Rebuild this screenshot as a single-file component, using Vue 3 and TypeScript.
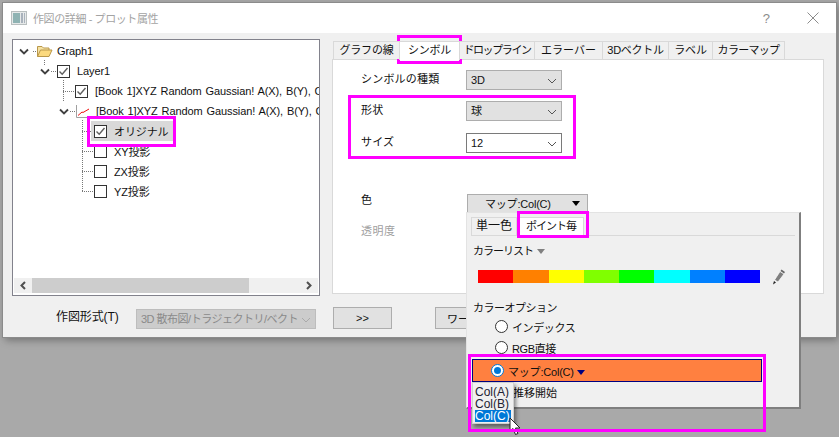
<script setup lang="ts">
interface TreeRow {
  label: string
  pad: number
  icon: 'folder' | 'check' | 'empty' | 'graph'
  chevron: boolean
  selected?: boolean
}
const treeRows: TreeRow[] = [
  { label: 'Graph1', pad: 23, icon: 'folder', chevron: true },
  { label: 'Layer1', pad: 44, icon: 'check', chevron: true },
  { label: '[Book 1]XYZ Random Gaussian! A(X), B(Y), C(Z)', pad: 62, icon: 'check', chevron: false },
  { label: '[Book 1]XYZ Random Gaussian! A(X), B(Y), C(Z)', pad: 63, icon: 'graph', chevron: true },
  { label: 'オリジナル', pad: 81, icon: 'check', chevron: false, selected: true },
  { label: 'XY投影', pad: 81, icon: 'empty', chevron: false },
  { label: 'ZX投影', pad: 81, icon: 'empty', chevron: false },
  { label: 'YZ投影', pad: 81, icon: 'empty', chevron: false }
]
const tabs = [
  { label: 'グラフの線', width: 67, active: false, spacing: -0.2 },
  { label: 'シンボル', width: 61, active: true, spacing: -0.2 },
  { label: 'ドロップライン', width: 76, active: false, spacing: -1.4 },
  { label: 'エラーバー', width: 69, active: false, spacing: 0 },
  { label: '3Dベクトル', width: 67, active: false, spacing: -0.3 },
  { label: 'ラベル', width: 45, active: false, spacing: -0.2 },
  { label: 'カラーマップ', width: 73, active: false, spacing: -0.7 }
]
const palette = ['#ff0000', '#ff8000', '#ffff00', '#80ff00', '#00ff00', '#00ffff', '#0080ff', '#0000ff']
const columns = ['Col(A)', 'Col(B)', 'Col(C)']
</script>

<template>
  <div class="screen">
    <div class="dialog">
      <header class="titlebar">
        <svg class="title-icon" width="16" height="14" viewBox="0 0 16 14">
          <rect x="0.5" y="0.5" width="15" height="13" fill="#e6e9e9" stroke="#b9bfbf" />
          <rect x="2" y="2" width="7" height="10" fill="#8fb3b3" />
          <rect x="10" y="2" width="2" height="10" fill="#a9b2bc" />
          <rect x="13" y="2" width="1" height="10" fill="#a9b2bc" />
        </svg>
        <span class="title-text">作図の詳細 - プロット属性</span>
        <span class="help">?</span>
        <svg class="close" width="12" height="12" viewBox="0 0 12 12">
          <path d="M0.5 0.5 L11.5 11.5 M11.5 0.5 L0.5 11.5" stroke="#8c8c8c" fill="none" />
        </svg>
      </header>

      <div class="content">
        <div class="tree">
          <svg class="tree-lines" width="306" height="238" viewBox="13 40 306 238">
            <g stroke="#777" stroke-dasharray="1 1" fill="none">
              <path d="M33 51.5H36" />
              <path d="M44.5 60V65" />
              <path d="M51 71.5H56" />
              <path d="M63.5 80V101" />
              <path d="M63 91.5H75" />
              <path d="M70 111.5H75" />
              <path d="M82.5 120V191" />
              <path d="M82 131.5H94M82 151.5H94M82 171.5H94M82 191.5H94" />
            </g>
          </svg>
          <div class="tree-rows">
            <div v-for="(row, i) in treeRows" :key="i" class="tree-row" :style="{ paddingLeft: row.pad + 'px' }">
              <svg v-if="row.chevron" class="tree-chevron" width="10" height="7" viewBox="0 0 10 7">
                <path d="M1 1.5 L5 5.5 L9 1.5" fill="none" stroke="#404040" stroke-width="1.8" />
              </svg>
              <svg v-if="row.icon === 'folder'" class="folder" width="17" height="14" viewBox="0 0 17 14">
                <path d="M1.5 12.5V2.5H6L7.5 4H13V6" fill="#f6e3a4" stroke="#b9974a" />
                <path d="M1.5 12.5L4.5 6H16L13 12.5Z" fill="#fbd97e" stroke="#b9974a" />
              </svg>
              <svg v-else-if="row.icon === 'graph'" class="graph" width="13" height="13" viewBox="0 0 13 13">
                <path d="M0.5 0V12.5H13" fill="none" stroke="#a0a0a0" />
                <path d="M2 10.5L6 7L7 7.5L13 4" fill="none" stroke="#ee1111" />
              </svg>
              <div v-else class="tree-body" :class="{ selected: row.selected }">
                <span class="check">
                  <svg v-if="row.icon === 'check'" width="11" height="11" viewBox="0 0 11 11">
                    <path d="M1.5 5.5L4.2 8.2L9.5 2" fill="none" stroke="#5f5f5f" stroke-width="1.4" />
                  </svg>
                </span>
                <span class="tree-label">{{ row.label }}</span>
              </div>
              <span v-if="row.icon === 'folder' || row.icon === 'graph'" class="tree-label">{{ row.label }}</span>
            </div>
          </div>
          <div class="hscroll">
            <svg class="hs-arrow" width="18" height="15" viewBox="0 0 18 15">
              <path d="M11 4L7.5 7.5L11 11" fill="none" stroke="#505050" stroke-width="2" />
            </svg>
            <div class="hs-thumb"></div>
            <svg class="hs-arrow end" width="18" height="15" viewBox="0 0 18 15">
              <path d="M7 4L10.5 7.5L7 11" fill="none" stroke="#505050" stroke-width="2" />
            </svg>
          </div>
        </div>

        <div class="props">
          <div class="tabbar">
            <div
              v-for="tab in tabs"
              :key="tab.label"
              class="tab"
              :class="{ active: tab.active }"
              :style="{ width: tab.width + 'px', letterSpacing: tab.spacing + 'px' }"
            >{{ tab.label }}</div>
          </div>
          <div class="panel">
            <div class="form-row first">
              <span class="form-label">シンボルの種類</span>
              <div class="combo">3D
                <svg class="chev" width="10" height="6" viewBox="0 0 10 6"><path d="M1 1L5 5L9 1" fill="none" stroke="#555" /></svg>
              </div>
            </div>
            <div class="form-row second">
              <span class="form-label">形状</span>
              <div class="combo">球
                <svg class="chev" width="10" height="6" viewBox="0 0 10 6"><path d="M1 1L5 5L9 1" fill="none" stroke="#555" /></svg>
              </div>
            </div>
            <div class="form-row third">
              <span class="form-label">サイズ</span>
              <div class="combo white">12
                <svg class="chev" width="10" height="6" viewBox="0 0 10 6"><path d="M1 1L5 5L9 1" fill="none" stroke="#555" /></svg>
              </div>
            </div>
            <div class="form-row color">
              <span class="form-label">色</span>
              <div class="color-btn">
                <span>マップ:Col(C)</span>
                <i class="tri black"></i>
              </div>
            </div>
            <div class="muted">透明度</div>
          </div>
        </div>
      </div>

      <footer class="footer">
        <span class="footer-label">作図形式(T)</span>
        <div class="combo disabled">
          3D 散布図/トラジェクトリ/ベクト
          <svg class="chev" width="10" height="6" viewBox="0 0 10 6"><path d="M1 1L5 5L9 1" fill="none" stroke="#aaa" /></svg>
        </div>
        <button class="btn more">&gt;&gt;</button>
        <button class="btn wide">ワークシート</button>
      </footer>
    </div>

    <div class="popup">
      <div class="pop-tabs">
        <div class="pop-tab">単一色</div>
        <div class="pop-tab on">ポイント毎</div>
      </div>
      <div class="pop-head">カラーリスト<i class="tri grey"></i></div>
      <div class="palette-row">
        <div class="palette">
          <span v-for="c in palette" :key="c" class="swatch" :style="{ background: c }"></span>
        </div>
        <svg class="pencil" width="14" height="16" viewBox="0 0 14 16">
          <path d="M8 2.5L12 5L6 13L2.5 11Z" fill="#808080" stroke="#fff" stroke-width="0.7" />
          <path d="M9.5 0.5L13 3L12 4.5L8.5 2Z" fill="#666" />
          <path d="M2 12L4 13.5L1 15.5Z" fill="#222" />
        </svg>
      </div>
      <div class="pop-head options">カラーオプション</div>
      <div class="radio-row"><i class="radio"></i>インデックス</div>
      <div class="radio-row"><i class="radio"></i>RGB直接</div>
      <div class="radio-row mapped"><i class="radio on"></i>マップ:Col(C)<i class="tri navy"></i></div>
      <div class="trans">推移開始</div>
    </div>

    <div class="col-menu">
      <div v-for="c in columns" :key="c" class="col-item" :class="{ on: c === 'Col(C)' }">{{ c }}</div>
    </div>

    <svg class="cursor" width="14" height="20" viewBox="0 0 14 20">
      <path d="M1 1V14L4 11.5L6.5 17.5L9 16.5L6.5 11H11Z" fill="#fff" stroke="#222" stroke-width="1" />
    </svg>

    <div class="mark m-tree"></div>
    <div class="mark m-tab"></div>
    <div class="mark m-shape"></div>
    <div class="mark m-pop"></div>
    <div class="mark m-map"></div>
  </div>
</template>

<style>
html, body { margin: 0; background: #a9a9a9; }
</style>

<style scoped>
.screen {
  position: relative;
  width: 839px;
  height: 437px;
  overflow: hidden;
  background: #a9a9a9;
  padding: 3px 0 0 3px;
  box-sizing: border-box;
  font: 11px "Liberation Sans", "Noto Sans CJK JP", sans-serif;
  color: #111;
}
.dialog {
  width: 833px;
  height: 334px;
  background: #f0f0f0;
  box-shadow: 0 0 0 1px #8b8b8b, 2px 3px 8px rgba(0, 0, 0, .35);
  display: flex;
  flex-direction: column;
}
.titlebar {
  height: 30px;
  background: #fff;
  display: flex;
  align-items: center;
  padding: 0 17px 0 8px;
  box-sizing: border-box;
}
.title-icon { margin-right: 6px; }
.title-text { font-size: 11px; letter-spacing: -.4px; color: #a3a3a3; }
.help { margin-left: auto; margin-right: 37px; color: #8c8c8c; font-size: 13px; }
.content {
  display: flex;
  gap: 12px;
  padding: 6px 12px 0 9px;
}
.tree {
  position: relative;
  width: 308px;
  height: 257px;
  box-sizing: border-box;
  background: #fff;
  border: 1px solid #82828c;
  display: flex;
  flex-direction: column;
}
.tree-lines { position: absolute; left: 0; top: 0; pointer-events: none; }
.tree-rows { flex: 1; padding-top: 1px; overflow: hidden; position: relative; }
.tree-row {
  height: 20px;
  display: flex;
  align-items: center;
  white-space: nowrap;
  box-sizing: border-box;
}
.tree-chevron { margin-left: -17px; margin-right: 7px; flex: none; }
.folder { margin-right: 4px; flex: none; }
.graph { margin-right: 7px; flex: none; }
.tree-body { display: flex; align-items: center; height: 20px; }
.tree-body.selected { background: #d9d9d9; margin-left: -3px; padding: 0 5px 0 3px; }
.check {
  width: 13px;
  height: 13px;
  box-sizing: border-box;
  border: 1px solid #333;
  background: #fff;
  margin-right: 7px;
  display: inline-flex;
  flex: none;
}
.tree-label { font-size: 11px; letter-spacing: -.1px; word-spacing: 1px; }
.hscroll {
  height: 15px;
  margin: 0 1px 2px 1px;
  background: #f0f0f0;
  display: flex;
  align-items: center;
}
.hs-thumb { width: 217px; height: 15px; background: #cdcdcd; }
.hs-arrow { flex: none; }
.hs-arrow.end { margin-left: auto; }
.props { width: 492px; padding-top: 2px; }
.tabbar { display: flex; height: 18px; padding-left: 1px; position: relative; z-index: 1; }
.tab {
  box-sizing: border-box;
  height: 18px;
  background: #f0f0f0;
  border: 1px solid #d9d9d9;
  border-bottom: 0;
  margin-right: -1px;
  text-align: center;
  line-height: 17px;
  white-space: nowrap;
  font-size: 11px;
}
.tab.active { background: #fff; height: 19px; }
.panel {
  box-sizing: border-box;
  height: 235px;
  background: #fff;
  border: 1px solid #d9d9d9;
  padding: 10px 0 0 28px;
}
.form-row { display: flex; align-items: center; }
.form-row.second { margin-top: 11px; }
.form-row.third { margin-top: 12px; }
.form-row.color { margin-top: 38px; }
.form-label { width: 105px; flex: none; font-size: 11px; letter-spacing: .2px; padding-bottom: 4px; box-sizing: border-box; }
.form-row.color .form-label { padding-bottom: 8px; }
.muted { font-size: 11px; letter-spacing: .5px; color: #a0a0a0; margin-top: 7px; }
.combo {
  position: relative;
  width: 96px;
  height: 20px;
  box-sizing: border-box;
  background: #e1e1e1;
  border: 1px solid #adadad;
  padding-left: 4px;
  line-height: 18px;
  font-size: 11px;
  white-space: nowrap;
  overflow: hidden;
}
.combo.white { background: #fff; border-color: #7a7a7a; }
.chev { position: absolute; right: 4px; top: 7px; }
.color-btn {
  width: 121px;
  height: 19px;
  box-sizing: border-box;
  margin-left: 1px;
  background: #e1e1e1;
  border: 1px solid #adadad;
  display: flex;
  align-items: center;
  padding-left: 17px;
  font-size: 11px;
  letter-spacing: -.2px;
  white-space: nowrap;
}
.tri {
  display: inline-block;
  width: 0;
  height: 0;
  flex: none;
  border-left: 4.5px solid transparent;
  border-right: 4.5px solid transparent;
}
.tri.black { border-top: 5px solid #000; margin-left: 21px; }
.tri.grey { border-top: 5px solid #808080; margin-left: 4px; }
.tri.navy { border-top: 5px solid #000080; margin-left: 3px; margin-top: 3px; }
.footer {
  display: flex;
  align-items: flex-start;
  padding: 11px 0 0 53px;
}
.footer-label { width: 80px; line-height: 20px; font-size: 12px; letter-spacing: -.1px; }
.combo.disabled {
  width: 180px;
  margin-top: 2px;
  background: #cccccc;
  border-color: #bdbdbd;
  color: #8a8a8a;
  letter-spacing: -.5px;
}
.btn {
  height: 22px;
  box-sizing: border-box;
  background: #e1e1e1;
  border: 1px solid #adadad;
  font: inherit;
  color: #111;
  padding: 0;
  white-space: nowrap;
  overflow: hidden;
}
.btn.more { width: 59px; margin-left: 17px; }
.btn.wide { width: 76px; margin-left: 43px; text-align: left; padding-left: 11px; }
.popup {
  position: absolute;
  left: 466px;
  top: 212px;
  width: 335px;
  height: 197px;
  box-sizing: border-box;
  background: #f0f0f0;
  border: 1px solid #e3e3e3;
  border-right: 2px solid #7f7f7f;
  border-bottom: 2px solid #7f7f7f;
  padding: 4px 4px 0 4px;
}
.pop-tabs { display: flex; height: 18px; border-bottom: 1px solid #d9d9d9; }
.pop-tab {
  width: 46px;
  box-sizing: border-box;
  border: 1px solid #d9d9d9;
  border-bottom: 0;
  text-align: center;
  line-height: 17px;
  font-size: 12px;
  white-space: nowrap;
}
.pop-tab.on { width: 66px; background: #fff; margin-left: 1px; height: 19px; font-size: 11px; letter-spacing: -1px; }
.pop-head { margin: 6px 0 0 2px; height: 18px; line-height: 18px; font-size: 11px; letter-spacing: -1px; display: flex; align-items: center; }
.pop-head.options { margin-top: 15px; margin-bottom: -1px; letter-spacing: -.5px; }
.palette-row { display: flex; align-items: center; margin: 9px 0 0 7px; height: 15px; }
.palette { display: flex; width: 282px; height: 13px; }
.swatch { flex: 1; }
.pencil { margin-left: 12px; }
.radio-row {
  display: flex;
  align-items: center;
  height: 21px;
  padding-left: 24px;
  font-size: 11px;
  letter-spacing: -.4px;
}
.radio {
  width: 13px;
  height: 13px;
  box-sizing: border-box;
  border: 1px solid #333;
  border-radius: 50%;
  background: #fff;
  margin-right: 4px;
  flex: none;
  position: relative;
}
.radio.on { border-color: #0078d7; }
.radio.on::after {
  content: "";
  position: absolute;
  left: 2px;
  top: 2px;
  width: 7px;
  height: 7px;
  border-radius: 50%;
  background: #0078d7;
}
.radio-row.mapped {
  width: 290px;
  height: 23px;
  box-sizing: border-box;
  margin: 1px 0 0 1px;
  padding-left: 18px;
  background: #ff8040;
  border: 1px solid #000080;
  letter-spacing: -.2px;
}
.trans { padding-left: 42px; margin-top: 1px; line-height: 20px; font-size: 11px; }
.col-menu {
  position: absolute;
  left: 472px;
  top: 382px;
  width: 42px;
  height: 42px;
  box-sizing: border-box;
  background: #f0f0f0;
  border: 1px solid #d0d0d0;
  padding: 3px 2px;
  box-shadow: 2px 3px 4px rgba(0, 0, 0, .45);
  font-size: 12px;
}
.col-item { height: 12px; line-height: 12px; color: #223; overflow: hidden; }
.col-item.on { background: #0078d7; color: #fff; }
.cursor { position: absolute; left: 509px; top: 417px; }
.mark {
  position: absolute;
  box-sizing: border-box;
  border: 3px solid #ff00ff;
  pointer-events: none;
}
.m-tree { left: 87px; top: 116px; width: 89px; height: 31px; }
.m-tab { left: 397px; top: 35px; width: 65px; height: 29px; }
.m-shape { left: 348px; top: 95px; width: 228px; height: 64px; }
.m-pop { left: 517px; top: 211px; width: 72px; height: 27px; }
.m-map { left: 468px; top: 354px; width: 298px; height: 78px; }
</style>
